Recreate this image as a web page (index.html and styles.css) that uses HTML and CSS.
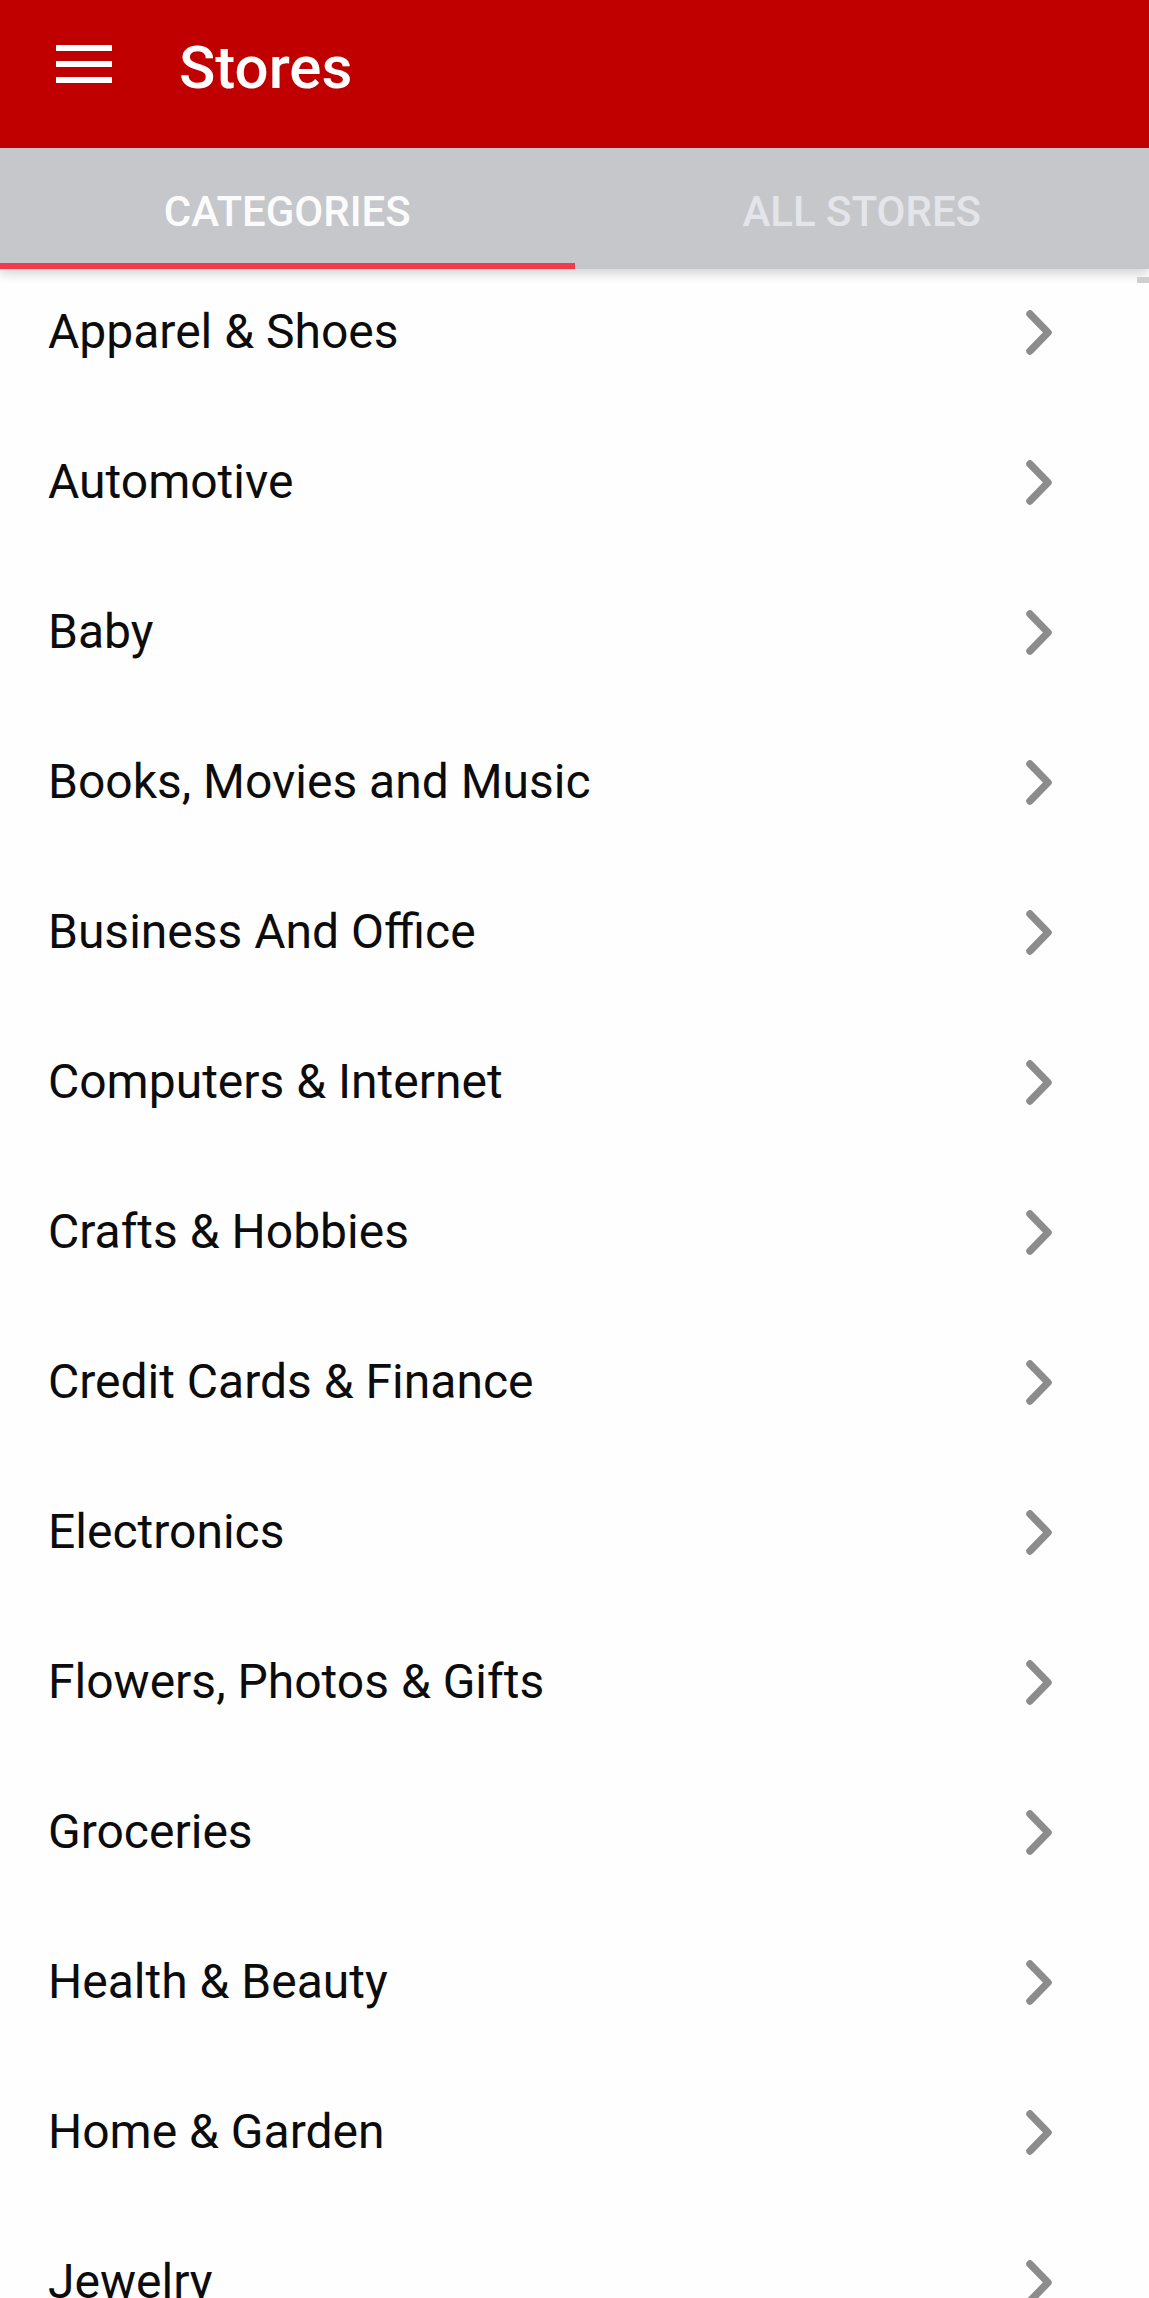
FILE: index.html
```html
<!DOCTYPE html>
<html lang="en">
<head>
<meta charset="utf-8">
<title>Stores</title>
<link rel="stylesheet" href="styles.css">
</head>
<body>
<div class="app">
  <header class="toolbar">
    <button class="menu-btn" aria-label="Menu">
      <span class="bar"></span><span class="bar"></span><span class="bar"></span>
    </button>
    <h1 class="title">Stores</h1>
  </header>
  <nav class="tabs">
    <div class="tab active">CATEGORIES</div>
    <div class="tab">ALL STORES</div>
  </nav>
  <div class="scroll-thumb"></div>
  <ul class="list">
    <li class="row"><span class="label">Apparel &amp; Shoes</span><svg class="chev" viewBox="0 0 28 45"><path d="M5 4 L23 22.5 L5 41"/></svg></li>
    <li class="row"><span class="label">Automotive</span><svg class="chev" viewBox="0 0 28 45"><path d="M5 4 L23 22.5 L5 41"/></svg></li>
    <li class="row"><span class="label">Baby</span><svg class="chev" viewBox="0 0 28 45"><path d="M5 4 L23 22.5 L5 41"/></svg></li>
    <li class="row"><span class="label">Books, Movies and Music</span><svg class="chev" viewBox="0 0 28 45"><path d="M5 4 L23 22.5 L5 41"/></svg></li>
    <li class="row"><span class="label">Business And Office</span><svg class="chev" viewBox="0 0 28 45"><path d="M5 4 L23 22.5 L5 41"/></svg></li>
    <li class="row"><span class="label">Computers &amp; Internet</span><svg class="chev" viewBox="0 0 28 45"><path d="M5 4 L23 22.5 L5 41"/></svg></li>
    <li class="row"><span class="label">Crafts &amp; Hobbies</span><svg class="chev" viewBox="0 0 28 45"><path d="M5 4 L23 22.5 L5 41"/></svg></li>
    <li class="row"><span class="label">Credit Cards &amp; Finance</span><svg class="chev" viewBox="0 0 28 45"><path d="M5 4 L23 22.5 L5 41"/></svg></li>
    <li class="row"><span class="label">Electronics</span><svg class="chev" viewBox="0 0 28 45"><path d="M5 4 L23 22.5 L5 41"/></svg></li>
    <li class="row"><span class="label">Flowers, Photos &amp; Gifts</span><svg class="chev" viewBox="0 0 28 45"><path d="M5 4 L23 22.5 L5 41"/></svg></li>
    <li class="row"><span class="label">Groceries</span><svg class="chev" viewBox="0 0 28 45"><path d="M5 4 L23 22.5 L5 41"/></svg></li>
    <li class="row"><span class="label">Health &amp; Beauty</span><svg class="chev" viewBox="0 0 28 45"><path d="M5 4 L23 22.5 L5 41"/></svg></li>
    <li class="row"><span class="label">Home &amp; Garden</span><svg class="chev" viewBox="0 0 28 45"><path d="M5 4 L23 22.5 L5 41"/></svg></li>
    <li class="row"><span class="label">Jewelry</span><svg class="chev" viewBox="0 0 28 45"><path d="M5 4 L23 22.5 L5 41"/></svg></li>
  </ul>
</div>
</body>
</html>
```
FILE: styles.css
```css
* { box-sizing: border-box; }
html, body {
  margin: 0;
  padding: 0;
  background: #ffffff;
}
body {
  font-family: Roboto, "Liberation Sans", sans-serif;
  overflow: hidden;
  height: 2298px;
}
.app {
  position: relative;
  width: 1149px;
  height: 2298px;
  overflow: hidden;
  background: #fefefe;
}
.toolbar {
  height: 148px;
  background: #c00000;
  display: flex;
  align-items: flex-start;
  padding-left: 56px;
}
.menu-btn {
  margin: 45px 0 0 0;
  padding: 0;
  border: 0;
  background: transparent;
  width: 56px;
  height: 38px;
  display: flex;
  flex-direction: column;
  justify-content: space-between;
}
.menu-btn .bar {
  display: block;
  width: 56px;
  height: 6px;
  background: #ffffff;
}
.title {
  margin: 27px 0 0 67px;
  color: #ffffff;
  font-family: Roboto, "Liberation Sans", sans-serif;
  font-weight: 500;
  font-size: 60px;
  line-height: 82px;
  letter-spacing: 0;
}
.tabs {
  position: relative;
  z-index: 2;
  height: 121px;
  background: #c6c7ca;
  display: flex;
  box-shadow: 0 5px 10px rgba(0, 0, 0, 0.16);
}
.tab {
  flex: 1;
  display: flex;
  justify-content: center;
  align-items: center;
  padding-top: 12px;
  font-family: Roboto, "Liberation Sans", sans-serif;
  font-weight: 500;
  font-size: 42px;
  color: #e4e5ea;
  border-bottom: 6px solid transparent;
}
.tab.active {
  color: #fbfbfb;
  border-bottom-color: #ef3b4c;
}
.scroll-thumb {
  position: absolute;
  z-index: 3;
  right: 0;
  top: 277px;
  width: 12px;
  height: 6px;
  background: #cfcfcf;
}
.list {
  list-style: none;
  margin: -12px 0 0 0;
  padding: 0;
}
.row {
  height: 150px;
  display: flex;
  align-items: center;
  justify-content: space-between;
  padding: 0 96px 0 48px;
}
.label {
  font-family: Roboto, "Liberation Sans", sans-serif;
  font-size: 48px;
  color: #0c0c0c;
  line-height: 60px;
}
.chev {
  width: 28px;
  height: 45px;
  flex: none;
}
.chev path {
  fill: none;
  stroke: #8c8c8c;
  stroke-width: 7.5;
  stroke-linecap: round;
  stroke-linejoin: round;
}
```
